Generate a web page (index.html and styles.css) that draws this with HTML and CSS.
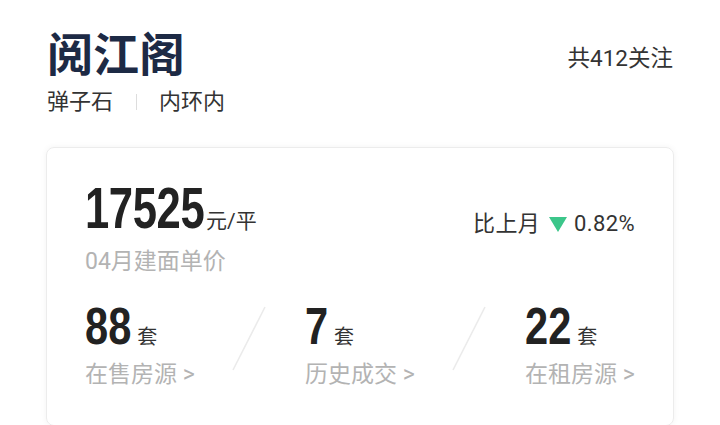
FILE: index.html
```html
<!DOCTYPE html>
<html lang="zh">
<head>
<meta charset="utf-8">
<link rel="stylesheet" href="styles.css">
</head>
<body>
<div class="page">
  <div class="header">
    <div class="title-block">
      <h1 class="title">阅江阁</h1>
      <div class="sub">弹子石<span class="sep"></span>内环内</div>
    </div>
    <div class="follow">共412关注</div>
  </div>
  <div class="card">
    <div class="price-row">
      <div class="price"><span class="num big">17525</span><span class="unit">元/平</span></div>
      <div class="change">比上月 <span class="tri"></span> 0.82%</div>
    </div>
    <div class="label">04月建面单价</div>
    <div class="stats">
      <div class="stat">
        <div class="stat-top"><span class="num mid n2">88</span><span class="unit2">套</span></div>
        <div class="label">在售房源 &gt;</div>
      </div>
      <div class="slash"><svg width="80" height="66" viewBox="0 0 80 66"><line x1="40" y1="1" x2="8" y2="64" stroke="#ebebeb" stroke-width="1.6"/></svg></div>
      <div class="stat">
        <div class="stat-top"><span class="num mid n1">7</span><span class="unit2">套</span></div>
        <div class="label">历史成交 &gt;</div>
      </div>
      <div class="slash"><svg width="80" height="66" viewBox="0 0 80 66"><line x1="40" y1="1" x2="8" y2="64" stroke="#ebebeb" stroke-width="1.6"/></svg></div>
      <div class="stat last">
        <div class="stat-top"><span class="num mid n2">22</span><span class="unit2">套</span></div>
        <div class="label">在租房源 &gt;</div>
      </div>
    </div>
  </div>
</div>
</body>
</html>
```
FILE: styles.css
```css
html, body {
  margin: 0;
  padding: 0;
  background: #ffffff;
}
body {
  font-family: Roboto, "Noto Sans CJK SC", sans-serif;
  color: #333333;
}
.page {
  padding: 24px 46px 0 46px;
}
.header {
  display: flex;
  justify-content: space-between;
  align-items: flex-start;
}
.title {
  margin: 0 0 0 1px;
  font-family: "Noto Sans CJK SC", sans-serif;
  font-weight: 700;
  font-size: 46px;
  line-height: 54px;
  color: #1d2a45;
}
.sub {
  margin-top: 9px;
  margin-left: 1px;
  font-size: 22px;
  line-height: 30px;
  color: #333333;
  display: flex;
  align-items: center;
}
.sep {
  display: inline-block;
  width: 1px;
  height: 16px;
  background: #dddddd;
  margin: 0 22px 0 23px;
}
.follow {
  margin-top: 19px;
  font-size: 22.5px;
  line-height: 30px;
  color: #333333;
  margin-right: 1px;
}
.card {
  margin-top: 30px;
  border: 1px solid #ececec;
  border-radius: 8px;
  box-shadow: 0 0 6px rgba(0,0,0,0.05);
  padding: 32px 38px 35px 38px;
}
.price-row {
  display: flex;
  justify-content: space-between;
  align-items: flex-start;
}
.price {
  display: flex;
  align-items: baseline;
}
.num {
  display: inline-block;
  font-family: "Liberation Sans", sans-serif;
  font-weight: 700;
  color: #222222;
  line-height: 1;
  transform-origin: 0 0;
}
.big {
  font-size: 57px;
  transform: scaleX(0.765);
  margin-right: -37px;
  letter-spacing: -0.5px;
}
.unit {
  font-size: 21px;
  color: #333333;
  margin-left: 2px;
}
.change {
  margin-top: 29px;
  font-size: 22px;
  line-height: 30px;
  display: flex;
  align-items: center;
  white-space: pre;
  letter-spacing: 0.4px;
}
.tri {
  display: inline-block;
  width: 0;
  height: 0;
  border-left: 9px solid transparent;
  border-right: 9px solid transparent;
  border-top: 15px solid #3cc68a;
  margin: 0 1px 0 3px;
}
.label {
  margin-top: 8px;
  font-size: 23px;
  line-height: 30px;
  color: #b3b3b3;
}
.stats {
  display: flex;
  margin-top: 23px;
}
.stat {
  width: 140px;
  flex-shrink: 0;
}
.stat.last {
  width: auto;
}
.stat-top {
  display: flex;
  align-items: baseline;
}
.mid {
  font-size: 52px;
  transform: scaleX(0.8);
}
.n2 {
  margin-right: -11.5px;
}
.n1 {
  margin-right: -6px;
}
.unit2 {
  font-size: 20px;
  color: #333333;
  margin-left: 6px;
}
.slash {
  width: 80px;
  height: 66px;
  flex-shrink: 0;
}
.slash svg {
  display: block;
  margin-top: 6px;
}
```
